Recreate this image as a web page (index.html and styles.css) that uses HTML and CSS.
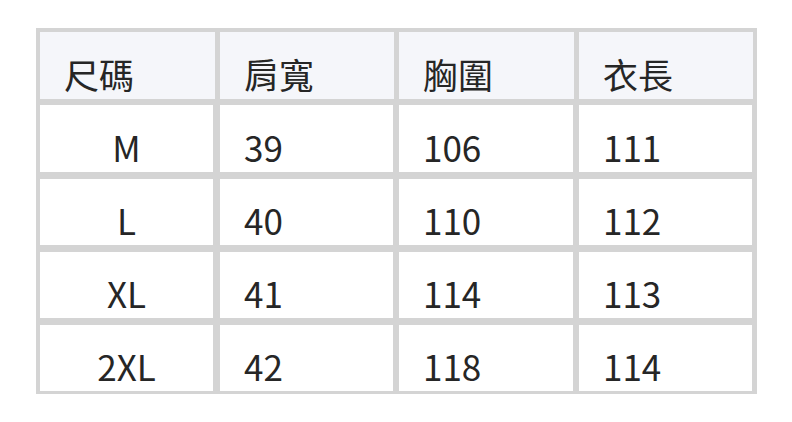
FILE: index.html
```html
<!DOCTYPE html>
<html lang="zh-Hant">
<head>
<meta charset="utf-8">
<title>尺碼表</title>
<link rel="stylesheet" href="styles.css">
</head>
<body>
<div class="size-table">
  <div class="cell head">尺碼</div>
  <div class="cell head">肩寬</div>
  <div class="cell head">胸圍</div>
  <div class="cell head">衣長</div>

  <div class="cell size">M</div>
  <div class="cell">39</div>
  <div class="cell">106</div>
  <div class="cell">111</div>

  <div class="cell size">L</div>
  <div class="cell">40</div>
  <div class="cell">110</div>
  <div class="cell">112</div>

  <div class="cell size">XL</div>
  <div class="cell">41</div>
  <div class="cell">114</div>
  <div class="cell">113</div>

  <div class="cell size">2XL</div>
  <div class="cell">42</div>
  <div class="cell">118</div>
  <div class="cell">114</div>
</div>
</body>
</html>
```
FILE: styles.css
```css
html, body {
  margin: 0;
  padding: 0;
  background: #ffffff;
}

body {
  padding: 28px 0 0 36px;
  font-family: "Noto Sans CJK TC", "Noto Sans", sans-serif;
  color: #262626;
}

.size-table {
  width: 721px;
  box-sizing: border-box;
  display: grid;
  grid-template-columns: 175px 174px 175px 174px;
  grid-template-rows: 67px 68px 67px 67px 67px;
  column-gap: 5px;
  row-gap: 6px;
  padding: 4px 4px 2px 4px;
  background: #d4d4d4;
}

.cell {
  background: #ffffff;
  display: flex;
  align-items: flex-end;
  padding: 0 0 8px 24px;
  font-size: 35px;
  line-height: 35px;
  margin: 0 1px 1px 0;
}

.cell.head {
  background: #f5f6fa;
  margin: 0;
}

.cell:nth-child(4n+5) {
  margin-right: 2px;
}

.cell.size {
  justify-content: center;
  padding-left: 0;
}
```
